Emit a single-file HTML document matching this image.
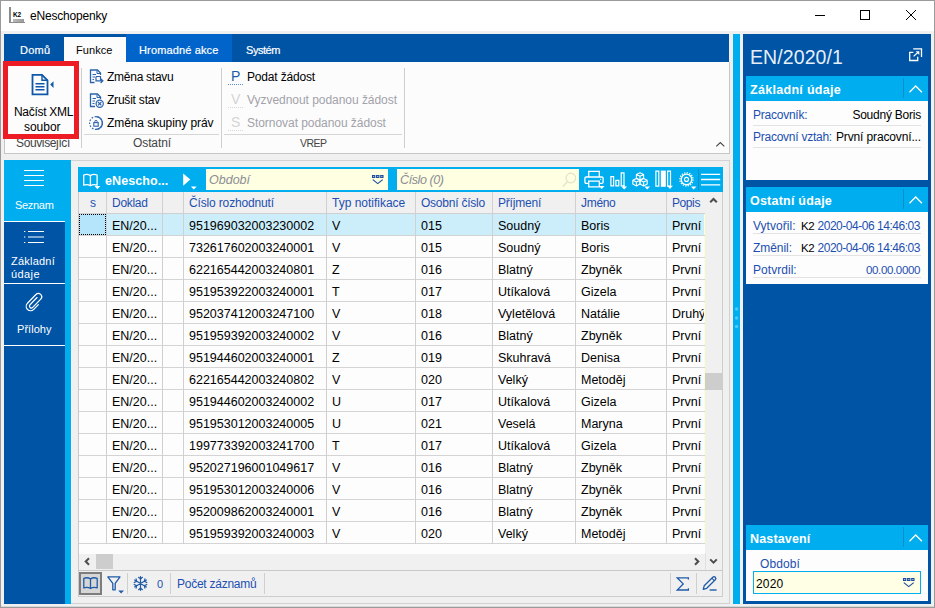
<!DOCTYPE html>
<html>
<head>
<meta charset="utf-8">
<title>eNeschopenky</title>
<style>
*{box-sizing:border-box;margin:0;padding:0}
html,body{width:935px;height:608px;overflow:hidden}
body{position:relative;background:#f0f0f0;font-family:"Liberation Sans",sans-serif;font-size:12px;color:#000}
.a{position:absolute}
.t{position:absolute;white-space:nowrap;line-height:14px}
.w{color:#fff}
.nb{color:#1c4fb0}
.gr{color:#a2a2aa}
.db{background:#0054a6}
.cy{background:#00aeef}
svg{position:absolute;overflow:visible}
/* grid */
.row{position:absolute;left:78px;width:627px;height:22px;border-bottom:1px solid #d4d4d4;background:#fdfdfd}
.row span{position:absolute;top:1px;line-height:22px;font-size:12.5px;white-space:nowrap}
.vl{position:absolute;width:1px;background:#d0d0d0}
.hdr span{position:absolute;top:1px;line-height:21px;font-size:12px;color:#1c4fb0;white-space:nowrap}
.sep{position:absolute;height:1px;background:#e3e3e3}
</style>
</head>
<body>
<!-- window frame -->
<div class="a" style="left:0;top:0;width:935px;height:608px;border:1px solid #9a9a9a"></div>
<div class="a" style="left:1px;top:1px;width:933px;height:30px;background:#fff"></div>

<!-- SECTION:TITLE -->
<div class="a" style="left:9px;top:7px;width:2px;height:16px;background:#8c8c8c"></div>
<div class="a" style="left:9px;top:22px;width:16px;height:1px;background:#8c8c8c"></div>
<div class="a" style="left:13px;top:19px;width:11px;height:3px;background:linear-gradient(90deg,#bbb,#999)"></div>
<div class="t" style="left:13px;top:12px;font-size:6.5px;line-height:6px;font-weight:bold;color:#000;letter-spacing:-0.3px">K2</div>
<div class="t" id="ttl" style="letter-spacing:-0.2px;;;;;;left:30px;top:9px;font-size:12px;line-height:14px">eNeschopenky</div>
<!-- caption buttons -->
<div class="a" style="left:815px;top:15px;width:10px;height:1px;background:#000"></div>
<div class="a" style="left:860px;top:10px;width:10px;height:10px;border:1px solid #000"></div>
<svg style="left:906px;top:10px" width="10" height="10" viewBox="0 0 10 10"><path d="M0 0L10 10M10 0L0 10" stroke="#000" stroke-width="1" fill="none"/></svg>
<!-- SECTION:TABS -->
<div class="a db" style="left:4px;top:34px;width:725px;height:28px"></div>
<div class="a" style="left:126px;top:34px;width:106px;height:28px;background:#0064cb"></div>
<div class="a" style="left:64px;top:37px;width:62px;height:25px;background:#fcfcfc"></div>
<div class="t w" id="tb1" style="letter-spacing:0.24px;-webkit-text-stroke:.2px #fff;;;;;font-size:11px;left:20px;top:43px;">Domů</div>
<div class="t" id="tb2" style="letter-spacing:0.07px;;;;;;font-size:11px;left:76px;top:43px;">Funkce</div>
<div class="t w" id="tb3" style="letter-spacing:0.14px;-webkit-text-stroke:.2px #fff;;;;;font-size:11px;left:139px;top:43px;">Hromadné akce</div>
<div class="t w" id="tb4" style="letter-spacing:-0.45px;-webkit-text-stroke:.2px #fff;;;;;font-size:11px;left:246px;top:43px;">Systém</div>
<!-- SECTION:RIBBON -->
<div class="a" style="left:4px;top:62px;width:726px;height:92px;background:#fcfcfc;border:1px solid #c6c6c6;border-top:none"></div>
<!-- group separators -->
<div class="a" style="left:81px;top:68px;width:1px;height:80px;background:#cfcfcf"></div>
<div class="a" style="left:221px;top:68px;width:1px;height:80px;background:#cfcfcf"></div>
<div class="a" style="left:404px;top:68px;width:1px;height:80px;background:#cfcfcf"></div>
<div class="a" style="left:6px;top:134px;width:73px;height:1px;background:#d6d6d6"></div>
<div class="a" style="left:84px;top:134px;width:135px;height:1px;background:#d6d6d6"></div>
<div class="a" style="left:224px;top:134px;width:178px;height:1px;background:#d6d6d6"></div>
<!-- group labels -->
<div class="t" id="gl1" style="letter-spacing:-0.37px;;;;margin-top:-1px;;left:16px;top:137px;color:#444">Související</div>
<div class="t" id="gl2" style="letter-spacing:-0.1px;;;;margin-top:-1px;;left:133px;top:137px;color:#444">Ostatní</div>
<div class="t" id="gl3" style="letter-spacing:-0.52px;;;;margin-top:-1px;font-size:10.5px;left:300px;top:137px;color:#444">VREP</div>
<!-- red highlight -->
<div class="a" style="left:3px;top:61px;width:76px;height:78px;border:5px solid #ed1c24;background:#fcfcfc"></div>
<!-- big icon: document + arrow -->
<svg style="left:31px;top:73px" width="24" height="23" viewBox="0 0 24 23"><path d="M1.5 1.8H11L16.5 7.3V21.3H1.5Z" fill="none" stroke="#0f57a8" stroke-width="1.8" stroke-linejoin="miter"/><path d="M11 1.8V7.3H16.5" fill="none" stroke="#0f57a8" stroke-width="1.4"/><path d="M4.5 10.7H13.5M4.5 13.7H13.5M4.5 16.7H13.5" stroke="#0f57a8" stroke-width="1.5"/><path d="M22.5 8.3V14.9L19.2 11.6Z" fill="#0f57a8"/></svg>
<div class="t" id="rb1" style="letter-spacing:-0.3px;;;;margin-top:1px;font-size:12px;left:14px;top:104px;line-height:15px">Načíst XML</div>
<div class="t" id="rb2" style="letter-spacing:-0.03px;;;;margin-top:1px;font-size:12px;left:24px;top:119px;line-height:15px">soubor</div>
<!-- small icons -->
<svg style="left:89px;top:69px" width="16" height="16" viewBox="0 0 16 16"><path d="M11.5 6V4L8.5 1H1.5V13.5H5.5" fill="none" stroke="#2c63ad" stroke-width="1.3"/><path d="M8 1.2V4.5H11.3" fill="none" stroke="#2c63ad" stroke-width="1"/><path d="M3.5 5.5H7M3.5 8H6M3.5 10.5H5" stroke="#2c63ad" stroke-width="1"/><path d="M7 7.5H11.5V11.8" fill="none" stroke="#2c63ad" stroke-width="1.2"/><path d="M7 7.5V11.8H13.5M11.6 9.6L13.9 11.8L11.6 14" fill="none" stroke="#2c63ad" stroke-width="1.2"/></svg>
<svg style="left:89px;top:93px" width="16" height="16" viewBox="0 0 16 16"><path d="M11.5 6V4L8.5 1H1.5V13.5H6" fill="none" stroke="#2c63ad" stroke-width="1.3"/><path d="M8 1.2V4.5H11.3" fill="none" stroke="#2c63ad" stroke-width="1"/><path d="M3.5 5.5H7M3.5 8H6M3.5 10.5H5.5" stroke="#2c63ad" stroke-width="1"/><circle cx="10.7" cy="10.7" r="3.6" fill="#fcfcfc" stroke="#2c63ad" stroke-width="1.2"/><path d="M9 9L12.4 12.4M12.4 9L9 12.4" stroke="#2c63ad" stroke-width="1.1"/></svg>
<svg style="left:88px;top:115px" width="16" height="16" viewBox="0 0 16 16"><circle cx="8" cy="8" r="6.4" fill="none" stroke="#2c63ad" stroke-width="1.2" stroke-dasharray="1.6 1.5" /><path d="M8 1.6A6.4 6.4 0 0 1 8 14.4" fill="none" stroke="#2c63ad" stroke-width="1.3"/><rect x="5.8" y="7.6" width="4.4" height="3.6" fill="none" stroke="#2c63ad" stroke-width="1.1"/><path d="M6.8 7.6V6.6A1.2 1.2 0 0 1 9.2 6.6V7.6" fill="none" stroke="#2c63ad" stroke-width="1"/></svg>
<div class="t" id="r1" style="letter-spacing:-0.26px;;;;;;left:107px;top:70px">Změna stavu</div>
<div class="t" id="r2" style="letter-spacing:-0.21px;;;;;;left:107px;top:93px">Zrušit stav</div>
<div class="t" id="r3" style="letter-spacing:-0.09px;;;;;;left:107px;top:116px">Změna skupiny práv</div>
<!-- VREP -->
<div class="t" id="pi1" style="left:231px;top:67px;font-size:14px;line-height:18px;color:#1f5aa6">P</div>
<div class="a" style="left:228px;top:84px;width:15px;height:0;border-top:1px dotted #5f8fd0"></div>
<div class="t" id="pi2" style="left:231px;top:90px;font-size:14px;line-height:18px;color:#d4d4d4">V</div>
<div class="a" style="left:228px;top:107px;width:15px;height:0;border-top:1px dotted #d8d8d8"></div>
<div class="t" id="pi3" style="left:231px;top:113px;font-size:14px;line-height:18px;color:#d4d4d4">S</div>
<div class="a" style="left:228px;top:130px;width:15px;height:0;border-top:1px dotted #d8d8d8"></div>
<div class="t" id="v1" style="letter-spacing:-0.17px;;;;;;left:247px;top:70px">Podat žádost</div>
<div class="t gr" id="v2" style="letter-spacing:-0.04px;;;;;;left:247px;top:93px">Vyzvednout podanou žádost</div>
<div class="t gr" id="v3" style="letter-spacing:-0.05px;;;;;;left:247px;top:116px">Stornovat podanou žádost</div>
<!-- collapse caret -->
<svg style="left:716px;top:142px" width="9" height="5" viewBox="0 0 9 5"><path d="M0.3 4.4L4.3 0.6L8.3 4.4" fill="none" stroke="#444" stroke-width="1.1"/></svg>
<!-- SECTION:SIDEBAR -->
<div class="a db" style="left:4px;top:160px;width:61px;height:444px"></div>
<div class="a cy" style="left:65px;top:160px;width:6px;height:444px"></div>
<div class="a cy" style="left:4px;top:160px;width:67px;height:61px"></div>
<div class="a" style="left:4px;top:221px;width:61px;height:1px;background:#fff"></div>
<div class="a" style="left:4px;top:283px;width:61px;height:1px;background:#fff"></div>
<div class="a" style="left:4px;top:345px;width:61px;height:1px;background:#fff"></div>
<svg style="left:24px;top:169px" width="21" height="18" viewBox="0 0 21 18"><path d="M0 1.5H20M0 6.5H20M0 11.5H20M0 16.5H20" stroke="#fff" stroke-width="1.2"/></svg>
<div class="t w" id="s1" style="letter-spacing:-0.31px;;;;;font-size:11px;left:15px;top:198px">Seznam</div>
<svg style="left:24px;top:230px" width="21" height="14" viewBox="0 0 21 14"><path d="M4 1.5H20M4 7H20M4 12.5H20" stroke="#fff" stroke-width="1.1"/><path d="M0 1.5H1.3M0 7H1.3M0 12.5H1.3" stroke="#fff" stroke-width="1.2"/></svg>
<div class="t w" id="s2" style="letter-spacing:0.22px;;;;;font-size:11px;left:11px;top:254px">Základní</div>
<div class="t w" id="s3" style="letter-spacing:0.42px;;;;;font-size:11px;left:11px;top:267px">údaje</div>
<svg style="left:25px;top:292px" width="19" height="20" viewBox="0 0 19 20"><g transform="translate(9.5,10.3) rotate(44)"><path d="M4.4 -1V5.6A4.4 4.4 0 0 1 -4.4 5.6V-6.6A3.35 3.35 0 0 1 2.3 -6.6V4.9A1.9 1.9 0 0 1 -1.5 4.9V-5.2" fill="none" stroke="#fff" stroke-width="1.2" stroke-linecap="round"/></g></svg>
<div class="t w" id="s4" style="letter-spacing:0.04px;;;;;font-size:11px;left:17px;top:322px">Přílohy</div>
<!-- SECTION:GRID -->
<div class="a" style="left:71px;top:160px;width:659px;height:444px;background:#f0f0f0;border:1px solid #d2d2d2;border-left:none"></div>
<div class="a" style="left:78px;top:192px;width:645px;height:405px;background:#f0f0f0;border:1px solid #cdcdcd;border-top:none"></div>
<div class="a cy" style="left:78px;top:167px;width:645px;height:25px"></div>
<!-- GRIDTOOLBAR -->
<svg style="left:83px;top:174px" width="17" height="15" viewBox="0 0 17 15"><path d="M7.4 1.6C5.6 0.4 2.7 0.3 0.7 1V11.2C2.7 10.5 5.6 10.6 7.4 11.8C9.2 10.6 12.1 10.5 14.1 11.2V1C12.1 0.3 9.2 0.4 7.4 1.6ZM7.4 1.6V11.8" fill="none" stroke="#fff" stroke-width="1.3" stroke-linejoin="round"/><path d="M11.5 12.1H17.3L14.4 15.2Z" fill="#fff"/></svg>
<div class="t w" id="gt" style="letter-spacing:0.08px;;;;margin-top:1px;;left:105px;top:172px;font-size:12.5px;line-height:16px;font-weight:bold">eNescho...</div>
<svg style="left:183px;top:174px" width="14" height="16" viewBox="0 0 14 16"><path d="M0.2 -0.6V11.8L7.3 5.6Z" fill="#fff"/><path d="M7.9 12.4H13.7L10.8 15.5Z" fill="#fff"/></svg>
<div class="a" style="left:206px;top:169px;width:182px;height:21px;background:#ffffe1"></div>
<div class="a" style="left:397px;top:169px;width:182px;height:21px;background:#ffffe1"></div>
<div class="t" id="ph1" style="left:209px;top:172px;font-size:12.5px;line-height:16px;font-style:italic;color:#8d8d96">Období</div>
<div class="t" id="ph2" style="letter-spacing:-0.4px;;;;;;left:400px;top:172px;font-size:12.5px;line-height:16px;font-style:italic;color:#8d8d96">Číslo (0)</div>
<svg style="left:372px;top:175px" width="12" height="10" viewBox="0 0 12 10"><path d="M0.5 0.5H2.8V2.4H0.5ZM4.6 0.5H6.9V2.4H4.6ZM8.7 0.5H11V2.4H8.7Z" fill="#dfe6f3" stroke="#1f4e9e" stroke-width="1.1"/><path d="M0.8 4.6L5.75 8.6L10.7 4.6" fill="none" stroke="#1f4e9e" stroke-width="1.2"/></svg>
<svg style="left:562px;top:172px" width="15" height="16" viewBox="0 0 15 16"><circle cx="8.8" cy="6" r="4.8" fill="none" stroke="#e1e1c9" stroke-width="1.2"/><path d="M5.4 9.6L0.8 14.6" stroke="#e1e1c9" stroke-width="1.4"/></svg>
<!-- printer -->
<svg style="left:584px;top:170px" width="21" height="19" viewBox="0 0 21 19"><path d="M4.7 7V1.4H15.3V7" fill="none" stroke="#fff" stroke-width="1.3"/><path d="M4.5 13.4H2.2C1.4 13.4 0.9 12.9 0.9 12.1V8.3C0.9 7.5 1.4 7 2.2 7H17.8C18.6 7 19.1 7.5 19.1 8.3V12.1C19.1 12.9 18.6 13.4 17.8 13.4H15.5" fill="none" stroke="#fff" stroke-width="1.3"/><path d="M4.7 11.2H15.3V16.9H4.7Z" fill="none" stroke="#fff" stroke-width="1.3"/><path d="M16 9.3H17.2" stroke="#fff" stroke-width="1"/><path d="M14.8 16.0H20.6L17.7 19.1Z" fill="#fff"/></svg>
<!-- chart -->
<svg style="left:610px;top:172px" width="18" height="18" viewBox="0 0 18 18"><path d="M0.9 4.6H3.6V13.8H0.9ZM5.9 8.4H8.8V13.8H5.9ZM11.2 0.8H14V13.8H11.2Z" fill="none" stroke="#fff" stroke-width="1.2"/><path d="M14 13V16" stroke="#fff" stroke-width="1.2"/><path d="M11.3 14.4H17.1L14.2 17.5Z" fill="#fff"/></svg>
<!-- cubes -->
<svg style="left:632px;top:172px" width="19" height="18" viewBox="0 0 19 18"><g fill="none" stroke="#fff" stroke-width="1.1" stroke-linejoin="round"><path d="M8 0.7L11.6 2.5V6.3L8 8.1L4.4 6.3V2.5ZM4.4 2.5L8 4.3L11.6 2.5M8 4.3V8.1"/><path d="M4.4 6.5L8 8.3V12.1L4.4 13.9L0.8 12.1V8.3ZM0.8 8.3L4.4 10.1L8 8.3M4.4 10.1V13.9"/><path d="M11.6 6.5L15.2 8.3V12.1L11.6 13.9L8 12.1V8.3ZM8 8.3L11.6 10.1L15.2 8.3M11.6 10.1V13.9"/></g><path d="M12.3 14.4H18.1L15.2 17.5Z" fill="#fff"/></svg>
<!-- columns -->
<svg style="left:655px;top:170px" width="19" height="19" viewBox="0 0 19 19"><path d="M0.9 1.2H3.8V16.2H0.9ZM12.6 1.2H15.5V16.2H12.6Z" fill="none" stroke="#fff" stroke-width="1.2"/><path d="M5.8 0.6H10.8V16.8H5.8Z" fill="#fff"/><path d="M12.1 15.8H17.9L15.0 18.9Z" fill="#fff"/></svg>
<!-- gear -->
<svg style="left:679px;top:172px" width="19" height="19" viewBox="0 0 19 19"><circle cx="7.5" cy="7.4" r="6.6" fill="none" stroke="#fff" stroke-width="1.3" stroke-dasharray="1.25 1.342"/><circle cx="7.5" cy="7.4" r="5.3" fill="none" stroke="#fff" stroke-width="1.4"/><circle cx="7.5" cy="7.4" r="2" fill="none" stroke="#fff" stroke-width="1.1"/><path d="M12 14.5H17.4L14.7 17.5Z" fill="#fff"/></svg>
<div class="a" style="left:698px;top:169px;width:1px;height:21px;background:#0b8fc9"></div>
<svg style="left:701px;top:173px" width="20" height="13" viewBox="0 0 20 13"><path d="M0 1.3H19.2M0 6.5H19.2M0 11.9H19.2" stroke="#fff" stroke-width="1.3"/></svg>
<div class="a hdr" style="left:78px;top:192px;width:627px;height:22px;background:#f0f0f0;border-bottom:1px solid #d0d0d0"><span id="h0" style="left:12px">s</span><span id="h1" style="letter-spacing:-0.29px;;;;;;left:34px">Doklad</span><span id="h2" style="letter-spacing:-0.15px;;;;;;left:111px">Číslo rozhodnutí</span><span id="h3" style="letter-spacing:-0.01px;;;;;;left:254px">Typ notifikace</span><span id="h4" style="letter-spacing:-0.23px;;;;;;left:343px">Osobní číslo</span><span id="h5" style="letter-spacing:-0.19px;;;;;;left:420px">Příjmení</span><span id="h6" style="letter-spacing:-0.31px;;;;;;left:503px">Jméno</span><span id="h7" style="letter-spacing:-0.41px;;;;;;left:594px">Popis</span></div>
<div class="a" style="left:78px;top:214px;width:627px;height:340px;background:#fdfdfd"></div>
<div class="row" style="top:214px;background:#cceefb"><span id="c0_0" style="left:34px">EN/20...</span><span id="c0_1" style="left:111px">951969032003230002</span><span id="c0_2" style="left:254px">V</span><span id="c0_3" style="left:343px">015</span><span id="c0_4" style="left:420px">Soudný</span><span id="c0_5" style="left:503px">Boris</span><span id="c0_6" style="left:594px">První</span><i style="position:absolute;left:626px;top:0;width:1px;height:21px;background:#ffffc8"></i></div>
<div class="row" style="top:236px"><span style="left:34px">EN/20...</span><span style="left:111px">732617602003240001</span><span style="left:254px">V</span><span style="left:343px">015</span><span style="left:420px">Soudný</span><span style="left:503px">Boris</span><span style="left:594px">První</span><i style="position:absolute;left:626px;top:0;width:1px;height:21px;background:#ffffc8"></i></div>
<div class="row" style="top:258px"><span style="left:34px">EN/20...</span><span style="left:111px">622165442003240801</span><span style="left:254px">Z</span><span style="left:343px">016</span><span style="left:420px">Blatný</span><span style="left:503px">Zbyněk</span><span style="left:594px">První</span><i style="position:absolute;left:626px;top:0;width:1px;height:21px;background:#ffffc8"></i></div>
<div class="row" style="top:280px"><span id="c3_0" style="left:34px">EN/20...</span><span id="c3_1" style="left:111px">951953922003240001</span><span id="c3_2" style="left:254px">T</span><span id="c3_3" style="left:343px">017</span><span id="c3_4" style="left:420px">Utíkalová</span><span id="c3_5" style="left:503px">Gizela</span><span id="c3_6" style="left:594px">První</span><i style="position:absolute;left:626px;top:0;width:1px;height:21px;background:#ffffc8"></i></div>
<div class="row" style="top:302px"><span id="c4_0" style="left:34px">EN/20...</span><span id="c4_1" style="left:111px">952037412003247100</span><span id="c4_2" style="left:254px">V</span><span id="c4_3" style="left:343px">018</span><span id="c4_4" style="left:420px">Vyletělová</span><span id="c4_5" style="left:503px">Natálie</span><span id="c4_6" style="left:594px">Druhý</span><i style="position:absolute;left:626px;top:0;width:1px;height:21px;background:#ffffc8"></i></div>
<div class="row" style="top:324px"><span style="left:34px">EN/20...</span><span style="left:111px">951959392003240002</span><span style="left:254px">V</span><span style="left:343px">016</span><span style="left:420px">Blatný</span><span style="left:503px">Zbyněk</span><span style="left:594px">První</span><i style="position:absolute;left:626px;top:0;width:1px;height:21px;background:#ffffc8"></i></div>
<div class="row" style="top:346px"><span style="left:34px">EN/20...</span><span style="left:111px">951944602003240001</span><span style="left:254px">Z</span><span style="left:343px">019</span><span style="left:420px">Skuhravá</span><span style="left:503px">Denisa</span><span style="left:594px">První</span><i style="position:absolute;left:626px;top:0;width:1px;height:21px;background:#ffffc8"></i></div>
<div class="row" style="top:368px"><span style="left:34px">EN/20...</span><span style="left:111px">622165442003240802</span><span style="left:254px">V</span><span style="left:343px">020</span><span style="left:420px">Velký</span><span style="left:503px">Metoděj</span><span style="left:594px">První</span><i style="position:absolute;left:626px;top:0;width:1px;height:21px;background:#ffffc8"></i></div>
<div class="row" style="top:390px"><span style="left:34px">EN/20...</span><span style="left:111px">951944602003240002</span><span style="left:254px">U</span><span style="left:343px">017</span><span style="left:420px">Utíkalová</span><span style="left:503px">Gizela</span><span style="left:594px">První</span><i style="position:absolute;left:626px;top:0;width:1px;height:21px;background:#ffffc8"></i></div>
<div class="row" style="top:412px"><span style="left:34px">EN/20...</span><span style="left:111px">951953012003240005</span><span style="left:254px">U</span><span style="left:343px">021</span><span style="left:420px">Veselá</span><span style="left:503px">Maryna</span><span style="left:594px">První</span><i style="position:absolute;left:626px;top:0;width:1px;height:21px;background:#ffffc8"></i></div>
<div class="row" style="top:434px"><span style="left:34px">EN/20...</span><span style="left:111px">199773392003241700</span><span style="left:254px">T</span><span style="left:343px">017</span><span style="left:420px">Utíkalová</span><span style="left:503px">Gizela</span><span style="left:594px">První</span><i style="position:absolute;left:626px;top:0;width:1px;height:21px;background:#ffffc8"></i></div>
<div class="row" style="top:456px"><span style="left:34px">EN/20...</span><span style="left:111px">952027196001049617</span><span style="left:254px">V</span><span style="left:343px">016</span><span style="left:420px">Blatný</span><span style="left:503px">Zbyněk</span><span style="left:594px">První</span><i style="position:absolute;left:626px;top:0;width:1px;height:21px;background:#ffffc8"></i></div>
<div class="row" style="top:478px"><span style="left:34px">EN/20...</span><span style="left:111px">951953012003240006</span><span style="left:254px">V</span><span style="left:343px">016</span><span style="left:420px">Blatný</span><span style="left:503px">Zbyněk</span><span style="left:594px">První</span><i style="position:absolute;left:626px;top:0;width:1px;height:21px;background:#ffffc8"></i></div>
<div class="row" style="top:500px"><span style="left:34px">EN/20...</span><span style="left:111px">952009862003240001</span><span style="left:254px">V</span><span style="left:343px">016</span><span style="left:420px">Blatný</span><span style="left:503px">Zbyněk</span><span style="left:594px">První</span><i style="position:absolute;left:626px;top:0;width:1px;height:21px;background:#ffffc8"></i></div>
<div class="row" style="top:522px"><span style="left:34px">EN/20...</span><span style="left:111px">951959392003240003</span><span style="left:254px">V</span><span style="left:343px">020</span><span style="left:420px">Velký</span><span style="left:503px">Metoděj</span><span style="left:594px">První</span><i style="position:absolute;left:626px;top:0;width:1px;height:21px;background:#ffffc8"></i></div>
<div class="vl" style="left:106px;top:192px;height:352px"></div>
<div class="vl" style="left:162px;top:192px;height:352px"></div>
<div class="vl" style="left:183px;top:192px;height:352px"></div>
<div class="vl" style="left:326px;top:192px;height:352px"></div>
<div class="vl" style="left:415px;top:192px;height:352px"></div>
<div class="vl" style="left:492px;top:192px;height:352px"></div>
<div class="vl" style="left:575px;top:192px;height:352px"></div>
<div class="vl" style="left:666px;top:192px;height:352px"></div>

<div class="a" style="left:705px;top:192px;width:17px;height:378px;background:#f0f0f0"></div>
<div class="a" style="left:705px;top:373px;width:17px;height:17px;background:#cdcdcd"></div>
<svg style="left:709px;top:197px" width="9" height="6" viewBox="0 0 9 6"><path d="M1.2 5.3L4.5 2L7.8 5.3" fill="none" stroke="#4d4d4d" stroke-width="2"/></svg>
<svg style="left:709px;top:558px" width="9" height="6" viewBox="0 0 9 6"><path d="M1.2 1.4L4.5 4.7L7.8 1.4" fill="none" stroke="#4d4d4d" stroke-width="2"/></svg>
<div class="a" style="left:78px;top:554px;width:627px;height:16px;background:#f0f0f0"></div>
<div class="a" style="left:96px;top:554px;width:17px;height:15px;background:#cdcdcd"></div>
<svg style="left:84px;top:557px" width="6" height="9" viewBox="0 0 6 9"><path d="M5 1.2L1.7 4.5L5 7.8" fill="none" stroke="#4d4d4d" stroke-width="2"/></svg>
<svg style="left:694px;top:557px" width="6" height="9" viewBox="0 0 6 9"><path d="M1 1.2L4.3 4.5L1 7.8" fill="none" stroke="#4d4d4d" stroke-width="2"/></svg>
<div class="a" style="left:78px;top:570px;width:645px;height:1px;background:#c8c8c8"></div>
<div class="a" style="left:705px;top:553px;width:1px;height:17px;background:#e0e0e0"></div>
<div class="vl" style="left:78px;top:192px;height:405px;background:#c9c9c9"></div>
<div class="a" style="left:79px;top:214px;width:27px;height:21px;border:1px dotted #000;background:#b5e5fb"></div>
<!-- STATUSBAR -->
<div class="a" style="left:79px;top:572px;width:23px;height:23px;background:#d6d6d6;border:2px solid #7d7d7d"></div>
<svg style="left:83px;top:577px" width="15" height="13" viewBox="0 0 15 13"><path d="M7.5 1.9C5.6 0.7 2.7 0.6 0.8 1.3V10.9C2.7 10.2 5.6 10.3 7.5 11.5C9.4 10.3 12.3 10.2 14.2 10.9V1.3C12.3 0.6 9.4 0.7 7.5 1.9ZM7.5 1.9V11.5" fill="none" stroke="#1f5aa6" stroke-width="1.3" stroke-linejoin="round"/></svg>
<svg style="left:107px;top:576px" width="18" height="18" viewBox="0 0 18 18"><path d="M0.8 0.9H13L8.2 7.4V13.8H5.8V7.4Z" fill="none" stroke="#1f5aa6" stroke-width="1.3" stroke-linejoin="round"/><path d="M11.2 14.4H17.0L14.1 17.5Z" fill="#1f5aa6"/></svg>
<div class="a" style="left:127px;top:573px;width:1px;height:21px;background:#cfcfcf"></div>
<svg style="left:133px;top:576px" width="15" height="15" viewBox="0 0 15 15"><g fill="none" stroke="#1f5aa6" stroke-width="1.2" stroke-linecap="round"><path d="M7.5 0.7V14.3M1.6 4.1L13.4 10.9M13.4 4.1L1.6 10.9"/><path d="M5.6 1.3L7.5 3L9.4 1.3M5.6 13.7L7.5 12L9.4 13.7M1.2 6.5L3.6 5.3L3.1 2.8M13.8 6.5L11.4 5.3L11.9 2.8M1.2 8.5L3.6 9.7L3.1 12.2M13.8 8.5L11.4 9.7L11.9 12.2"/></g></svg>
<div class="t nb" id="st0" style="letter-spacing:-0.33px;;;;;font-size:11px;left:157px;top:577px">0</div>
<div class="a" style="left:170px;top:573px;width:1px;height:21px;background:#cfcfcf"></div>
<div class="t nb" id="st1" style="letter-spacing:-0.25px;;;;;;left:177px;top:577px">Počet záznamů</div>
<div class="a" style="left:264px;top:573px;width:1px;height:21px;background:#cfcfcf"></div>
<div class="a" style="left:670px;top:573px;width:1px;height:21px;background:#cfcfcf"></div>
<svg style="left:676px;top:577px" width="14" height="14" viewBox="0 0 14 14"><path d="M12.4 2.6V0.8H1.2L7.2 6.9L1.2 13H12.4V11.2" fill="none" stroke="#1f5aa6" stroke-width="1.3"/></svg>
<div class="a" style="left:696px;top:573px;width:1px;height:21px;background:#cfcfcf"></div>
<svg style="left:702px;top:576px" width="16" height="16" viewBox="0 0 16 16"><path d="M1.2 13.4L2.2 9.8L10.8 1.2C11.5 0.5 12.6 0.5 13.3 1.2C14 1.9 14 3 13.3 3.7L4.7 12.3Z" fill="none" stroke="#1f5aa6" stroke-width="1.3" stroke-linejoin="round"/><path d="M9.8 2.2L12.3 4.7" stroke="#1f5aa6" stroke-width="1.1"/><path d="M7.6 14H14.6" stroke="#1f5aa6" stroke-width="1.4"/></svg>
<!-- SECTION:RIGHT -->
<div class="a cy" style="left:733px;top:34px;width:7px;height:570px"></div>
<div class="a db" style="left:743px;top:34px;width:188px;height:570px"></div>
<svg style="left:733px;top:306px" width="7" height="24" viewBox="0 0 7 24"><circle cx="3.6" cy="3" r="1.7" fill="#4cc9fb"/><circle cx="3.6" cy="12" r="1.7" fill="#4cc9fb"/><circle cx="3.6" cy="20.5" r="1.7" fill="#4cc9fb"/></svg>
<div class="t w" id="rt" style="letter-spacing:0.09px;color:rgba(255,255,255,.93);;;margin-top:1px;;left:750px;top:44px;font-size:19.5px;line-height:24px">EN/2020/1</div>
<svg style="left:909px;top:48px" width="14" height="14" viewBox="0 0 14 14"><path d="M4.4 4.4H0.7V12.5H8.7V8.8" fill="none" stroke="#fff" stroke-width="1.3"/><path d="M4.2 0.8H12.5V9" fill="none" stroke="#fff" stroke-width="1.3"/><path d="M4.6 8.4L9 4.2" stroke="#fff" stroke-width="1.2"/><path d="M6.6 3.3H10.3V7Z" fill="#fff"/></svg>
<div class="a cy" style="left:746px;top:76px;width:182px;height:25px"></div><div class="t w" id="rh1" style="letter-spacing:0.3px;;;;margin-top:1.5px;;left:750px;top:80px;font-size:12.5px;line-height:16px;font-weight:bold">Základní údaje</div><div class="a" style="left:903px;top:78px;width:1px;height:20px;background:#0b8fc9"></div><svg style="left:909px;top:84.5px" width="14" height="8" viewBox="0 0 14 8"><path d="M0.5 7.2L6.7 1L12.9 7.2" fill="none" stroke="#fff" stroke-width="1.3"/></svg>
<div class="a" style="left:746px;top:101px;width:182px;height:79px;background:#fdfdfd"></div>
<div class="t nb" id="k1" style="letter-spacing:-0.24px;;;;;;left:753px;top:108px">Pracovník:</div>
<div class="t" id="k2" style="letter-spacing:-0.23px;;;;;;right:14px;top:108px">Soudný Boris</div>
<div class="sep" style="left:753px;top:125px;width:168px"></div>
<div class="t nb" id="k3" style="letter-spacing:-0.25px;;;;;;left:753px;top:130px">Pracovní vztah:</div>
<div class="t" id="k4" style="letter-spacing:-0.14px;;;;;;right:14px;top:130px">První pracovní...</div>
<div class="sep" style="left:753px;top:147px;width:168px"></div>
<div class="a cy" style="left:746px;top:187px;width:182px;height:25px"></div><div class="t w" id="rh2" style="letter-spacing:0.22px;;;;margin-top:1.5px;;left:750px;top:191px;font-size:12.5px;line-height:16px;font-weight:bold">Ostatní údaje</div><div class="a" style="left:903px;top:189px;width:1px;height:20px;background:#0b8fc9"></div><svg style="left:909px;top:195.5px" width="14" height="8" viewBox="0 0 14 8"><path d="M0.5 7.2L6.7 1L12.9 7.2" fill="none" stroke="#fff" stroke-width="1.3"/></svg>
<div class="a" style="left:746px;top:212px;width:182px;height:72px;background:#fdfdfd"></div>
<div class="t nb" id="o1" style="letter-spacing:0.03px;;;;;;left:753px;top:219px">Vytvořil:</div>
<div class="t" id="o2" style="letter-spacing:-0.54px;;;;;font-size:11.5px;left:801px;top:219px">K2</div>
<div class="t nb" id="o3" style="letter-spacing:-0.47px;;;;;;right:15px;top:219px">2020-04-06 14:46:03</div>
<div class="sep" style="left:753px;top:233px;width:168px"></div>
<div class="t nb" id="o4" style="letter-spacing:-0.05px;;;;;;left:753px;top:241px">Změnil:</div>
<div class="t" id="o5" style="letter-spacing:-0.54px;;;;;font-size:11.5px;left:801px;top:241px">K2</div>
<div class="t nb" id="o6" style="letter-spacing:-0.47px;;;;;;right:15px;top:241px">2020-04-06 14:46:03</div>
<div class="sep" style="left:753px;top:255px;width:168px"></div>
<div class="t nb" id="o7" style="letter-spacing:0.04px;;;;;;left:753px;top:263px">Potvrdil:</div>
<div class="t nb" id="o8" style="letter-spacing:-0.36px;;;;;font-size:11.5px;right:15px;top:263px">00.00.0000</div>
<div class="sep" style="left:753px;top:277px;width:168px"></div>
<div class="a cy" style="left:746px;top:525px;width:182px;height:25px"></div><div class="t w" id="rh3" style="letter-spacing:0.16px;;;;margin-top:1.5px;;left:750px;top:529px;font-size:12.5px;line-height:16px;font-weight:bold">Nastavení</div><div class="a" style="left:903px;top:527px;width:1px;height:20px;background:#0b8fc9"></div><svg style="left:909px;top:533.5px" width="14" height="8" viewBox="0 0 14 8"><path d="M0.5 7.2L6.7 1L12.9 7.2" fill="none" stroke="#fff" stroke-width="1.3"/></svg>
<div class="a" style="left:746px;top:550px;width:182px;height:51px;background:#fdfdfd"></div>
<div class="t nb" id="n1" style="letter-spacing:0.1px;;;;margin-top:1px;;left:760px;top:556px">Období</div>
<div class="a" style="left:753px;top:571px;width:168px;height:23px;background:#ffffe6;border:1px solid #00aeef"></div>
<div class="t" id="n2" style="letter-spacing:0.2px;;;;;;left:756px;top:577px">2020</div>
<svg style="left:903px;top:578px" width="12" height="10" viewBox="0 0 12 10"><path d="M0.5 0.5H2.8V2.4H0.5ZM4.6 0.5H6.9V2.4H4.6ZM8.7 0.5H11V2.4H8.7Z" fill="#dfe6f3" stroke="#1f4e9e" stroke-width="1.1"/><path d="M0.8 4.6L5.75 8.6L10.7 4.6" fill="none" stroke="#1f4e9e" stroke-width="1.2"/></svg>
<!-- bottom window edge -->
<div class="a" style="left:1px;top:606px;width:933px;height:1px;background:#d9d9d9"></div>
</body>
</html>
